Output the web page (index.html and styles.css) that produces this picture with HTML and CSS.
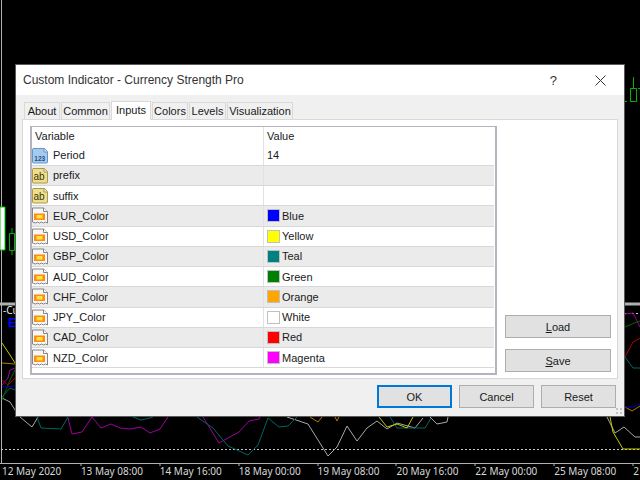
FILE: index.html
```html
<!DOCTYPE html>
<html lang="en">
<head>
<meta charset="utf-8">
<title>Custom Indicator - Currency Strength Pro</title>
<link rel="stylesheet" href="styles.css">
</head>
<body>
<svg width="0" height="0" class="defs">
  <symbol id="i-col" viewBox="0 0 16 17">
    <path d="M.5 1h11l4 3.500v11.500l-2-1-2 1-2-1-2 1-2-1-2 1-3-1z" fill="#f7f7f7" stroke="#858585"/>
    <path d="M11.500 1v3.500h4" fill="#fff" stroke="#858585"/>
    <rect x="2" y="6.500" width="11" height="6.500" fill="#ff8a14"/>
    <rect x="4.500" y="8" width="6" height="3.500" fill="#ffe23c"/>
  </symbol>
</svg>

<div class="chart">
  <svg class="plot" width="640" height="480" viewBox="0 0 640 480">
    <g fill="none" stroke-width="1">
      <path d="M1.500 0V463M0 463.500H640" stroke="#b0b0b0"/>
      <path d="M0 304H16M624 304H640" stroke="#b0b0b0" stroke-width="3"/>
      <path d="M1 449.500H640" stroke="#c8c8c8" stroke-dasharray="2 2"/>
      <path d="M624 313.500H640" stroke="#c8c8c8" stroke-dasharray="2 2"/>
      <path d="M81 463v3M160 463v3M239 463v3M318 463v3M396 463v3M475 463v3M554 463v3M633 463v3" stroke="#b0b0b0"/>
      <path d="M0 207h5v43H0z" fill="#fff" stroke="#00c800"/>
      <path d="M9.500 233.500h5v17h-5zM12 228v5M12 251v4" stroke="#00b400"/>
      <path d="M630.500 88.500h6v13h-6zM633.500 77v11M625 101.500h2M638 88.500h2" stroke="#00b400"/>
      <path d="M2 398L10 402 15 410 20 417 32 427 38 417M287 417L308 424 328 456 337 447 347 426 357 441 367 428 377 421 387 429 397 423 415 428 423 418M430 417L437 424 447 422 448 417M607 417L615 433 624 427 635 437 640 437" stroke="#a8a8a8"/>
      <path d="M68 418L72 434 82 432 92 417 101 428 111 424 120 428 130 429 141 427 150 433 160 429 168 417M203 417L219 443 239 432 249 421 259 419 260 417M625 314L633 313 640 327M2 385L8 378 10 370 15 368" stroke="#a000a0"/>
      <path d="M37 417L41 428 61 429 68 417M133 417L141 420 150 418 153 417M197 417L213 428 228 446 248 455 258 445 268 418 279 427 288 426 297 417M390 417L397 428 415 428 425 428 431 418M625 357L633 368 640 368M2 397L10 388 15 390" stroke="#006464"/>
      <path d="M310 417L318 422 322 417M335 417L337 421 339 417M625 407L632 411 640 406M2 363L15 364" stroke="#b47800"/>
      <path d="M379 417L387 427 397 424 407 428 413 417M610 417L613 432 623 449 640 449M2 343L10 355 15 363" stroke="#c8c800"/>
      <path d="M625 327L637 322 640 321M2 400L10 380 15 370" stroke="#006400"/>
      <path d="M625 357L633 342 640 338M2 380L8 385 15 378" stroke="#b40000"/>
      <path d="M625 407L633 407 640 404M2 387L15 386" stroke="#0000b4"/>
    </g>
  </svg>
  <div class="pane-label">-Cu</div>
  <div class="pane-badge">E</div>
  <div class="axis">
    <span>12 May 2020</span><span>13 May 08:00</span><span>14 May 16:00</span><span>18 May 00:00</span><span>19 May 08:00</span><span>20 May 16:00</span><span>22 May 00:00</span><span>25 May 08:00</span><span>2</span>
  </div>
</div>

<div class="dialog">
  <header class="titlebar">
    <span class="title">Custom Indicator - Currency Strength Pro</span>
    <span class="help">?</span>
    <svg class="close" width="11" height="11" viewBox="0 0 11 11"><path d="M.5.500l10 10M10.500.500l-10 10" fill="none" stroke="#333"/></svg>
  </header>
  <div class="body">
    <nav class="tabs">
      <span class="tab tab-about">About</span>
      <span class="tab tab-common">Common</span>
      <span class="tab tab-inputs active">Inputs</span>
      <span class="tab tab-colors">Colors</span>
      <span class="tab tab-levels">Levels</span>
      <span class="tab tab-vis">Visualization</span>
    </nav>
    <section class="panel">
      <div class="grid">
        <div class="head"><span class="cell-name">Variable</span><span class="cell-value">Value</span></div>
        <div class="row"><span class="cell-name"><svg class="icon" viewBox="0 0 16 17"><path d="M1 1.500h11.500l3 3v10.500a1 1 0 0 1-1 1h-13a1 1 0 0 1-1-1v-12.500a1 1 0 0 1 .5-1z" fill="#a5caf0" stroke="#6496c8"/><path d="M12 1.500v3.500h3.500" fill="#dcebfa" stroke="#6496c8"/><text x="7.800" y="13.500" class="icon-text num">123</text></svg>Period</span><span class="cell-value">14</span></div>
        <div class="row alt"><span class="cell-name"><svg class="icon" viewBox="0 0 16 17"><path d="M1 1.500h11.500l3 3v10.500a1 1 0 0 1-1 1h-13a1 1 0 0 1-1-1v-12.500a1 1 0 0 1 .5-1z" fill="#efdf8c" stroke="#a89a50"/><path d="M12 1.500v3.500h3.500" fill="#faf4cf" stroke="#a89a50"/><text x="7" y="13" class="icon-text str">ab</text></svg>prefix</span><span class="cell-value"></span></div>
        <div class="row"><span class="cell-name"><svg class="icon" viewBox="0 0 16 17"><path d="M1 1.500h11.500l3 3v10.500a1 1 0 0 1-1 1h-13a1 1 0 0 1-1-1v-12.500a1 1 0 0 1 .5-1z" fill="#efdf8c" stroke="#a89a50"/><path d="M12 1.500v3.500h3.500" fill="#faf4cf" stroke="#a89a50"/><text x="7" y="13" class="icon-text str">ab</text></svg>suffix</span><span class="cell-value"></span></div>
        <div class="row alt"><span class="cell-name"><svg class="icon"><use href="#i-col"/></svg>EUR_Color</span><span class="cell-value"><i class="swatch blue"></i>Blue</span></div>
        <div class="row"><span class="cell-name"><svg class="icon"><use href="#i-col"/></svg>USD_Color</span><span class="cell-value"><i class="swatch yellow"></i>Yellow</span></div>
        <div class="row alt"><span class="cell-name"><svg class="icon"><use href="#i-col"/></svg>GBP_Color</span><span class="cell-value"><i class="swatch teal"></i>Teal</span></div>
        <div class="row"><span class="cell-name"><svg class="icon"><use href="#i-col"/></svg>AUD_Color</span><span class="cell-value"><i class="swatch green"></i>Green</span></div>
        <div class="row alt"><span class="cell-name"><svg class="icon"><use href="#i-col"/></svg>CHF_Color</span><span class="cell-value"><i class="swatch orange"></i>Orange</span></div>
        <div class="row"><span class="cell-name"><svg class="icon"><use href="#i-col"/></svg>JPY_Color</span><span class="cell-value"><i class="swatch white"></i>White</span></div>
        <div class="row alt"><span class="cell-name"><svg class="icon"><use href="#i-col"/></svg>CAD_Color</span><span class="cell-value"><i class="swatch red"></i>Red</span></div>
        <div class="row"><span class="cell-name"><svg class="icon"><use href="#i-col"/></svg>NZD_Color</span><span class="cell-value"><i class="swatch magenta"></i>Magenta</span></div>
      </div>
      <div class="side">
        <button class="btn wide" type="button"><u>L</u>oad</button>
        <button class="btn wide" type="button"><u>S</u>ave</button>
      </div>
    </section>
    <footer class="footer">
      <button class="btn default" type="button">OK</button>
      <button class="btn" type="button">Cancel</button>
      <button class="btn" type="button">Reset</button>
    </footer>
    <svg class="grip" width="7" height="7" viewBox="0 0 7 7"><path d="M0 0h2v2H0zM4 0h2v2H4zM0 4h2v2H0zM4 4h2v2H4z" fill="#c4c4c4"/></svg>
  </div>
</div>
</body>
</html>
```

FILE: styles.css
```css
* { box-sizing: border-box; }
html, body { margin: 0; padding: 0; }
body {
  width: 640px;
  height: 480px;
  overflow: hidden;
  background: #000;
  font-family: "Liberation Sans", Arial, sans-serif;
  font-size: 11px;
  color: #1a1a1a;
  position: relative;
}
.defs { position: absolute; }
.icon-text { font-family: "Liberation Sans", sans-serif; text-anchor: middle; font-weight: 700; }
.icon-text.num { font-size: 6.500px; fill: #1f4f80; }
.icon-text.str { font-size: 10px; fill: #3a3510; font-weight: 400; }

.chart { position: absolute; inset: 0; }
.plot { position: absolute; left: 0; top: 0; }
.pane-label { position: absolute; left: 3px; top: 305px; color: #e8e8e8; font-family: "Noto Sans", sans-serif; font-size: 10px; line-height: 11px; }
.pane-badge { position: absolute; left: 8px; top: 317px; color: #0000ff; font-size: 13px; font-weight: 700; line-height: 12px; }
.axis {
  position: absolute;
  left: 2px;
  top: 464px;
  display: grid;
  grid-template-columns: repeat(9, 78.900px);
  font-family: "Noto Sans", sans-serif;
  color: #d8d8d8;
  font-size: 10px;
  line-height: 15px;
  white-space: nowrap;
  width: 638px;
  overflow: hidden;
}

.dialog {
  position: absolute;
  left: 15px;
  top: 64px;
  width: 610px;
  height: 353px;
  border: 1px solid #5a5a5a;
  background: #f0f0f0;
  display: flex;
  flex-direction: column;
}
.titlebar {
  height: 30px;
  flex: none;
  background: #fff;
  display: flex;
  align-items: center;
  padding: 0 18px 0 7px;
}
.title { font-size: 12px; color: #333; flex: 1; }
.help { font-size: 13px; color: #333; margin-right: 38px; }
.body { flex: 1; display: flex; flex-direction: column; padding-top: 6px; position: relative; }

.tabs { display: flex; height: 18px; padding-left: 8px; align-items: flex-end; position: relative; z-index: 1; }
.tab {
  height: 17px;
  margin-right: 1px;
  border: 1px solid #d9d9d9;
  border-bottom: 0;
  background: #f0f0f0;
  display: flex;
  align-items: center;
  justify-content: center;
}
.tab.active { height: 19px; margin-bottom: -1px; padding-bottom: 2px; background: #fff; }
.tab-about { width: 36px; }
.tab-common { width: 49px; }
.tab-inputs { width: 40px; }
.tab-colors { width: 36px; }
.tab-levels { width: 37px; }
.tab-vis { width: 66px; }

.panel {
  margin: 0 6px;
  height: 260px;
  background: #fff;
  border: 1px solid #d9d9d9;
  display: flex;
  padding: 6px 7px 4px 7px;
}
.grid {
  width: 467px;
  height: 249px;
  border: 1px solid #b4b4c0;
  border-width: 1px 2px 2px 2px;
  flex: none;
  padding-right: 1px;
}
.head, .row { display: grid; grid-template-columns: 231px 1fr; }
.head { height: 18.500px; align-items: center; }
.head .cell-name { padding-left: 3px; }
.row {
  height: 20.250px;
  border-bottom: 1px solid #d8d8d8;
  align-items: center;
}
.row.alt { background: #ebebeb; }
.cell-name { display: flex; align-items: center; height: 100%; }
.cell-value {
  display: flex;
  align-items: center;
  height: 100%;
  padding-left: 3px;
  border-left: 1px solid #e2e2e2;
}
.icon { width: 16px; height: 17px; margin-right: 5px; flex: none; }
.swatch {
  width: 13px;
  height: 13px;
  border: 1px solid #c0c0c0;
  margin-right: 2px;
  flex: none;
}
.blue { background: #0000ff; }
.yellow { background: #ffff00; }
.teal { background: #008080; }
.green { background: #008000; }
.orange { background: #ffa500; }
.white { background: #fff; }
.red { background: #ff0000; }
.magenta { background: #ff00ff; }

.side {
  margin-left: 8px;
  flex: 1;
  display: flex;
  flex-direction: column;
  justify-content: flex-end;
  gap: 11px;
  padding-bottom: 2px;
}
.btn {
  font: inherit;
  color: #1a1a1a;
  background: #e1e1e1;
  border: 1px solid #adadad;
  width: 75px;
  height: 23px;
  padding: 0;
}
.btn.wide { width: 106px; }
.btn.default { border: 2px solid #0078d7; }
.footer {
  display: flex;
  justify-content: flex-end;
  gap: 7px;
  padding: 6px 8px 0 0;
}
.grip { position: absolute; right: 1px; bottom: 1px; }
```
